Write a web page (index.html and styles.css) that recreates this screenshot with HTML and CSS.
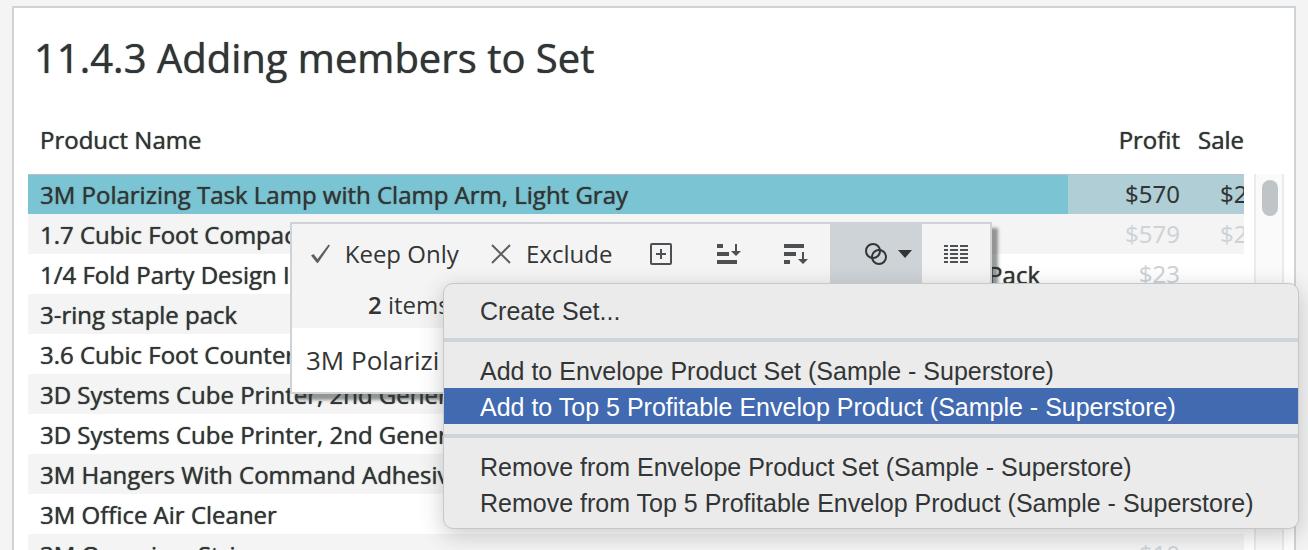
FILE: index.html
```html
<!DOCTYPE html>
<html lang="en">
<head>
<meta charset="utf-8">
<title>11.4.3 Adding members to Set</title>
<link rel="stylesheet" href="styles.css">
</head>
<body>
<main class="sheet">
  <h1 class="title">11.4.3 Adding members to Set</h1>
  <div class="view">
    <div class="viewport">
      <table class="grid">
        <colgroup><col><col class="col-profit"><col class="col-sales"></colgroup>
        <thead>
          <tr><th scope="col">Product Name</th><th scope="col" class="num">Profit</th><th scope="col" class="sales">Sale</th></tr>
        </thead>
        <tbody>
          <tr class="selected"><td>3M Polarizing Task Lamp with Clamp Arm, Light Gray</td><td class="num">$570</td><td class="sales">$2</td></tr>
          <tr><td>1.7 Cubic Foot Compac</td><td class="num">$579</td><td class="sales">$2</td></tr>
          <tr><td><span class="split"><span>1/4 Fold Party Design I</span><span>Pack</span></span></td><td class="num">$23</td><td class="sales"></td></tr>
          <tr><td>3-ring staple pack</td><td class="num"></td><td class="sales"></td></tr>
          <tr><td>3.6 Cubic Foot Counter</td><td class="num"></td><td class="sales"></td></tr>
          <tr><td>3D Systems Cube Printer, 2nd Gener</td><td class="num"></td><td class="sales"></td></tr>
          <tr><td>3D Systems Cube Printer, 2nd Gener</td><td class="num"></td><td class="sales"></td></tr>
          <tr><td>3M Hangers With Command Adhesiv</td><td class="num"></td><td class="sales"></td></tr>
          <tr><td>3M Office Air Cleaner</td><td class="num"></td><td class="sales"></td></tr>
          <tr><td>3M Organizer Strips</td><td class="num">$10</td><td class="sales"></td></tr>
        </tbody>
      </table>
    </div>
    <div class="scrollbar"><div class="thumb"></div></div>
  </div>
</main>

<section class="tooltip" aria-label="Selection">
  <div class="toolbar">
    <button class="tool keep" type="button">
      <svg width="24" height="24" viewBox="0 0 24 24"><path d="M2 13.500L4.500 12l4 5L19.500 2.500l1.500 1L9 21H8z" fill="#5d6063"/></svg><span>Keep Only</span>
    </button>
    <button class="tool exclude" type="button">
      <svg width="22" height="22" viewBox="0 0 22 22"><path d="M2 2l18 18M20 2L2 20" stroke="#5d6063" stroke-width="2" fill="none"/></svg><span>Exclude</span>
    </button>
    <button class="tool icon" type="button" aria-label="Group members">
      <svg width="24" height="24" viewBox="0 0 24 24" fill="none" stroke="#4d5052" stroke-width="2"><rect x="2" y="2" width="20" height="20" rx="1"/><path d="M12 7v10M7 12h10"/></svg>
    </button>
    <button class="tool icon" type="button" aria-label="Sort ascending">
      <svg width="26" height="24" viewBox="0 0 26 24" fill="#4d5052"><path d="M1 2h6v4H1zM1 10h12v4H1zM1 18h20v4H1z"/><path d="M19 2h2v7h4l-5 5-5-5h4z"/></svg>
    </button>
    <button class="tool icon" type="button" aria-label="Sort descending">
      <svg width="26" height="24" viewBox="0 0 26 24" fill="#4d5052"><path d="M1 2h20v4H1zM1 10h12v4H1zM1 18h6v4H1z"/><path d="M19 10h2v7h4l-5 5-5-5h4z"/></svg>
    </button>
    <button class="tool sets" type="button" aria-label="Sets" aria-expanded="true">
      <svg width="24" height="24" viewBox="0 0 24 24" fill="none" stroke="#323535" stroke-width="2"><circle cx="9" cy="9" r="7"/><circle cx="15" cy="15" r="7"/></svg>
      <svg width="14" height="8" viewBox="0 0 14 8"><path d="M0 0h14L7 8z" fill="#323535"/></svg>
    </button>
    <button class="tool icon" type="button" aria-label="View data">
      <svg width="26" height="20" viewBox="0 0 26 20" stroke="#4d5052" stroke-width="2"><path d="M1 2h4M7 2h8M17 2h8M1 6h4M7 6h8M17 6h8M1 10h4M7 10h8M17 10h8M1 14h4M7 14h8M17 14h8M1 18h4M7 18h8M17 18h8"/></svg>
    </button>
  </div>
  <p class="summary"><b>2</b> items</p>
  <p class="member">3M Polarizi</p>
</section>

<div class="menu" role="menu">
  <button class="item" role="menuitem" type="button">Create Set...</button>
  <hr>
  <button class="item" role="menuitem" type="button">Add to Envelope Product Set (Sample - Superstore)</button>
  <button class="item active" role="menuitem" type="button">Add to Top 5 Profitable Envelop Product (Sample - Superstore)</button>
  <hr>
  <button class="item" role="menuitem" type="button">Remove from Envelope Product Set (Sample - Superstore)</button>
  <button class="item" role="menuitem" type="button">Remove from Top 5 Profitable Envelop Product (Sample - Superstore)</button>
</div>
</body>
</html>
```
FILE: styles.css
```css
* { box-sizing: border-box; }
body {
  margin: 0;
  height: 100vh;
  overflow: hidden;
  position: relative;
  padding: 6px 12px 0;
  background: #f4f4f4;
  color: #323535;
  font-family: "Open Sans", sans-serif;
}
button { border: 0; background: none; color: inherit; font: inherit; white-space: nowrap; }
.sheet {
  background: #fff;
  border: 2px solid #cdd3d7;
  border-bottom: 0;
  padding: 20px 10px 0 14px;
}
.title { margin: 0 0 16px; padding-left: 6px; font-size: 40px; line-height: 60px; font-weight: 400; }
.title, .grid th, .grid td { text-shadow: 0 0 1px currentColor; }
.view { display: flex; gap: 10px; }
.viewport { flex: 1; min-width: 0; overflow: hidden; }
.grid { width: calc(100% + 40px); table-layout: fixed; border-collapse: collapse; font-size: 24px; line-height: 38px; }
.col-profit { width: 118px; }
.col-sales { width: 98px; }
.grid th, .grid td { padding: 2px 0 0 12px; height: 40px; text-align: left; font-weight: 400; white-space: nowrap; overflow: hidden; }
.grid th { height: 70px; vertical-align: middle; }
.grid .num { text-align: right; padding: 2px 6px 0 0; }
.grid td.num, .grid td.sales { padding-top: 0; font-family: "Noto Sans", sans-serif; color: #cdd3d7; text-shadow: none; }
.grid td.sales { padding-left: 34px; }
.grid tbody tr:nth-child(even) { background: #f4f4f4; }
.grid tbody .selected td { background: #7bc4d3; box-shadow: inset 0 1px #b8c4c9; }
.grid tbody .selected .num, .grid tbody .selected .sales { background: #b0ced6; color: #323535; }
.split { display: flex; justify-content: space-between; padding-right: 28px; }
.scrollbar { width: 30px; margin-top: 70px; padding: 6px; background: #fafafa; border: solid #ebebeb; border-width: 0 2px; }
.thumb { height: 36px; width: 16px; border-radius: 8px; background: #bfc4c7; }

.tooltip {
  position: absolute;
  left: 290px;
  top: 222px;
  width: 702px;
  border: 2px solid #cdd3d7;
  background: #f4f4f4;
  box-shadow: 6px 6px 3px rgba(50, 53, 53, .5);
  font-size: 24px;
}
.toolbar { display: flex; align-items: stretch; height: 60px; }
.tool { display: flex; align-items: center; justify-content: center; padding: 0; }
.tool span { padding-bottom: 2px; }
.keep { width: 184px; gap: 12px; }
.exclude { width: 150px; gap: 14px; }
.icon { width: 68px; }
.sets { width: 92px; gap: 10px; padding-left: 24px; background: #cdd3d7; border-bottom: 1px solid #77797c; }
.exclude { width: 152px; }
.summary, .member { margin: 0; }
.summary { padding: 0 0 2px 76px; line-height: 42px; }
.summary b { font-weight: 600; }
.member { padding-left: 14px; line-height: 64px; font-size: 26px; background: #fff; }

.menu {
  position: absolute;
  left: 443px;
  top: 283px;
  width: 856px;
  padding: 8px 0;
  border: 1px solid #c3c8cb;
  border-radius: 10px;
  background: #ebebeb;
  box-shadow: 0 6px 22px rgba(50, 53, 53, .25);
  font-family: "Liberation Sans", sans-serif;
  font-size: 25px;
  text-shadow: 0 0 0 currentColor;
}
.menu hr { height: 4px; margin: 10px 0; border: 0; background: #cdd3d7; }
.item { display: block; width: 100%; height: 36px; padding: 2px 36px 0; line-height: 34px; text-align: left; }
.active { background: #426ab0; color: #fff; }
```
